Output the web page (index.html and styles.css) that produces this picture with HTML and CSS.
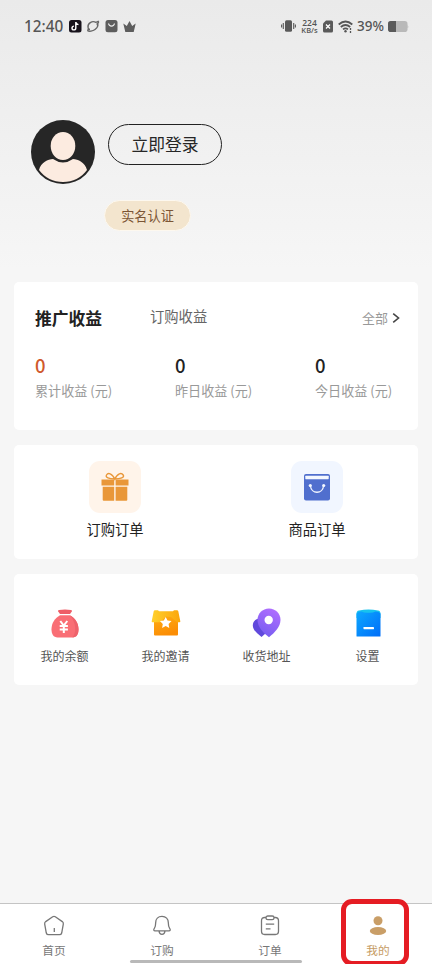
FILE: index.html
```html
<!DOCTYPE html>
<html lang="zh-CN">
<head>
<meta charset="utf-8">
<meta name="viewport" content="width=device-width, initial-scale=1">
<title>我的</title>
<link rel="stylesheet" href="styles.css">
</head>
<body>
<div class="app">
  <header class="status">
    <span class="clock">12:40</span>
    <svg width="68" height="14" viewBox="0 0 68 14">
      <rect x="0" y="1" width="12.500" height="12.500" rx="2.500" fill="#17121b"/>
      <path d="M6.800 3v6a1.900 1.900 0 1 1-1.900-1.900M6.800 3.200c.3 1.600 1.300 2.300 2.700 2.400" fill="none" stroke="#fff" stroke-width="1.400"/>
      <path d="M19 8.500C18.500 4 23 1.500 27 3.300l2.300-.9c.8.800-.4 2-1.800 3M19.500 9l-.7 2.700c1 1 5 .5 7.200-1.200 2.300-1.700 3.200-3.500 2.800-5.500M19 8.500c.3 1.500 1 2 2 2" fill="none" stroke="#666" stroke-width="1.400"/>
      <rect x="36.500" y="1" width="12" height="12.300" rx="2.500" fill="#5d5d5d"/>
      <path d="M39.500 4.500c.6 3.500 5.400 3.500 6 0" fill="none" stroke="#eee" stroke-width="1.200"/>
      <path d="M54.300 4.500l3.500 2.600L60.500 2l2.700 5.100 3.500-2.600-2 8.500h-8.400z" fill="#5d5d5d"/>
    </svg>
    <div class="status-right">
      <svg width="15" height="14" viewBox="0 0 15 14"><rect x="4" y="1.200" width="7" height="11.600" rx="1.500" fill="#5a5a5a"/><path d="M2.300 4v6M.6 5.500v3M12.700 4v6M14.400 5.500v3" stroke="#5a5a5a" stroke-width="1.100"/></svg>
      <span class="rate"><b>224</b><b class="unit">KB/s</b></span>
      <svg class="sim" width="10" height="13" viewBox="0 0 10 13"><path d="M3 .5h5.500q1.500 0 1.500 1.500v9q0 1.500-1.500 1.500h-7Q0 12.500 0 11V3.500z" fill="#5a5a5a"/><path d="M3 4.500l4 4M7 4.500l-4 4" stroke="#fff" stroke-width="1.300"/></svg>
      <svg class="wifi" width="15" height="13" viewBox="0 0 15 13"><g fill="none" stroke="#555" stroke-width="1.700"><path d="M.7 4.500q6.800-6 13.600 0M2.800 7q4.700-4 9.400 0M5 9.300q2.500-2 5 0"/></g><circle cx="7.500" cy="11.300" r="1.200" fill="#555"/><path d="M12.500 8v5" stroke="#555" stroke-width="1.300" stroke-dasharray="2 1"/></svg>
      <span class="percent">39%</span>
      <svg class="battery" width="21" height="11" viewBox="0 0 21 11"><rect width="19.500" height="11" rx="2.800" fill="#b9b9b9"/><path d="M8 0H2.800Q0 0 0 2.800v5.400Q0 11 2.800 11H8z" fill="#5a5a5a"/><path d="M19.500 3.500q1.500 2 0 4z" fill="#b9b9b9"/></svg>
    </div>
  </header>

  <section class="profile">
    <svg class="avatar" width="64" height="64" viewBox="0 0 64 64">
      <circle cx="32" cy="32" r="32" fill="#262626"/>
      <path d="M8 50C10 42 17 39.500 22 39q10 7 20 0c5 .5 12 3 14 11C50 58 42 62 32 62S14 58 8 50z" fill="#fcebe0"/>
      <ellipse cx="32" cy="26" rx="12.300" ry="14" fill="#fcebe0"/>
    </svg>
    <div class="profile-actions">
      <button class="login">立即登录</button>
      <span class="verify">实名认证</span>
    </div>
  </section>

  <main>
    <section class="card income">
      <div class="tabs">
        <h2>推广收益</h2>
        <span class="tab">订购收益</span>
        <span class="all">全部</span>
        <svg class="chevron" width="8" height="10" viewBox="0 0 8 10"><path d="M1.200 .7l5.300 4.300-5.300 4.300" fill="none" stroke="#444" stroke-width="1.600"/></svg>
      </div>
      <div class="stats">
        <div><b class="hot">0</b><span>累计收益 (元)</span></div>
        <div><b>0</b><span>昨日收益 (元)</span></div>
        <div><b>0</b><span>今日收益 (元)</span></div>
      </div>
    </section>

    <section class="card orders">
      <div class="order">
        <span class="tile warm"><svg width="28" height="30" viewBox="0 0 28 30" fill="#e99739">
          <path d="M.5 7.500h12.700v6H.5zM14.600 7.500h12.900v6H14.600zM1.700 14.800h11.500v14H2.700q-1 0-1-1zM14.600 14.800h11.700v13q0 1-1 1H14.600z"/>
          <path d="M13.800 7C8 7 4 5.500 5.500 3S11 1 13.800 7C16.600 1 20.500.5 22.200 3s-2.600 4-8.400 4z" fill="none" stroke="#e99739" stroke-width="1.400"/>
        </svg></span>
        <span>订购订单</span>
      </div>
      <div class="order">
        <span class="tile cool"><svg width="26" height="27" viewBox="0 0 26 27"><rect width="26" height="26.500" rx="2" fill="#506fce"/><rect x="1.300" y="1.700" width="23.400" height="3.500" rx=".6" fill="#f3f7ff"/><path d="M6.300 11.500c1 9 12.400 9 13.400 0" fill="none" stroke="#f3f7ff" stroke-width="1.300"/><circle cx="6.300" cy="11.500" r="1.600" fill="#f3f7ff"/><circle cx="19.700" cy="11.500" r="1.600" fill="#f3f7ff"/></svg></span>
        <span>商品订单</span>
      </div>
    </section>

    <section class="card tools">
      <div class="tool">
        <svg width="30" height="30" viewBox="0 0 30 30">
          <path d="M9 2q6-1 12 0 1.500.3.800 1.500L20 6H10L8.200 3.500Q7.500 2.300 9 2z" fill="#ee5e67"/>
          <path d="M10 7.300h10c5 3 8.500 7.500 8.500 14 0 5-2 8.200-6 8.200h-15c-4 0-6-3.200-6-8.200C1.500 14.800 5 10.300 10 7.300z" fill="#f96e75"/>
          <path d="M20 7.300c5 3 8.500 7.500 8.500 14 0 5-2 8.200-6 8.200 4-5 4-14-2.500-22.200z" fill="#ee626b"/>
          <path d="M10.300 13l3.400 4.500L17.300 13M9.700 18h8.200M9.700 21.500h8.200M13.800 17.500v7.500" fill="none" stroke="#fff" stroke-width="2"/>
        </svg>
        <span>我的余额</span>
      </div>
      <div class="tool">
        <svg width="30" height="30" viewBox="0 0 30 30">
          <defs><linearGradient id="box" x1="0" x2=".4" y2="1"><stop stop-color="#ffae13"/><stop offset="1" stop-color="#fb8d05"/></linearGradient><linearGradient id="lid"><stop stop-color="#ffd02c"/><stop offset="1" stop-color="#fba50b"/></linearGradient></defs>
          <path d="M3 8h24v18.500q0 1-1 1H4q-1 0-1-1z" fill="url(#box)"/>
          <path d="M4 2.300h3l1 1h14l1-1h3q1 0 1.300 1l2 10q.2 1-.8 1H26L20 9l-5-.5L9 14.300H1.500q-1 0-.8-1l2-10q.3-1 1.300-1z" fill="url(#lid)"/>
          <path d="M14.700 9l1.800 3.600 4 .5-2.900 2.800.7 4-3.600-1.900-3.600 1.900.7-4-2.900-2.800 4-.5z" fill="#fff"/>
        </svg>
        <span>我的邀请</span>
      </div>
      <div class="tool">
        <svg width="30" height="30" viewBox="0 0 30 30">
          <defs><linearGradient id="pin" x1=".7" x2=".3" y2="1"><stop stop-color="#b06eff"/><stop offset="1" stop-color="#755cf0"/></linearGradient></defs>
          <path d="M10 10C4 10 .8 13 .8 17.500c0 5 5.200 8.500 8.700 11.500L14 25z" fill="#6049dc"/>
          <path d="M17 .5c6.500 0 11.500 5 11.500 11.300 0 7-5.500 12.500-11.500 17.500C10.500 24.300 5.500 18.800 5.500 11.800 5.500 5.500 10.500.5 17 .5z" fill="url(#pin)"/>
          <circle cx="16.700" cy="12" r="4.200" fill="#fff"/>
        </svg>
        <span>收货地址</span>
      </div>
      <div class="tool">
        <svg width="30" height="30" viewBox="0 0 30 30">
          <defs><linearGradient id="drawer" x1="0" x2="1" y2="1"><stop stop-color="#0da8ff"/><stop offset="1" stop-color="#006df8"/></linearGradient></defs>
          <path d="M3.500 6Q3.500 3 6 2.600 15.500.5 25 2.600q2.500.4 2.500 3.400v4h-24z" fill="#17c3ee"/>
          <path d="M3.500 5.500Q5.500 3.300 8.500 3.500q3 1.500 7 1.200 4 .3 7-1.200 3-.2 5 2v22.500q0 .5-.5.500H4q-.5 0-.5-.5z" fill="url(#drawer)"/>
          <rect x="10.500" y="19" width="10.500" height="2.200" rx=".4" fill="#fff"/>
        </svg>
        <span>设置</span>
      </div>
    </section>
  </main>

  <nav class="nav">
    <a class="nav-item">
      <svg viewBox="0 0 22 22"><path d="M9.700 1.800q1.300-.9 2.600 0l7 4.800q1.300 1 1 2.500L18.700 18q-.5 1.700-2.200 1.700h-11q-1.700 0-2.200-1.700L1.700 9.100q-.3-1.500 1-2.500zM11.300 13v4"/></svg>
      <span>首页</span>
    </a>
    <a class="nav-item">
      <svg viewBox="0 0 22 22"><path d="M11 1.300C7 1.300 4.700 4 4.700 7.500c0 4-.6 4.500-1.600 6.300-.7 1.300-.3 2 .9 2h14c1.200 0 1.600-.7.900-2-1-1.800-1.600-2.300-1.600-6.300C17.300 4 15 1.300 11 1.300zM8 16c.5 4.400 5.500 4.400 6 0"/></svg>
      <span>订购</span>
    </a>
    <a class="nav-item">
      <svg viewBox="0 0 22 22"><path d="M7 2.500H5.700Q2.500 2.500 2.500 5.700v10.600q0 3.200 3.200 3.200h10.600q3.200 0 3.200-3.200V5.700q0-3.200-3.200-3.200H15M6.800 9.200h8.400M6.800 13.800h4.700"/><rect x="7" y="1" width="8" height="3.700" rx="1.800"/></svg>
      <span>订单</span>
    </a>
    <a class="nav-item active">
      <svg viewBox="0 0 22 22"><circle cx="11" cy="5.700" r="4.500"/><ellipse cx="11" cy="16" rx="8.200" ry="4"/></svg>
      <span>我的</span>
    </a>
    <i class="home-bar"></i>
    <i class="highlight"></i>
  </nav>
</div>
</body>
</html>
```
FILE: styles.css
```css
* { box-sizing: border-box; }

body {
  margin: 0;
  font-family: "Noto Sans CJK SC", sans-serif;
  color: #222;
  background: #f6f6f6;
}

.app {
  display: flex;
  flex-direction: column;
  height: 964px;
  overflow: hidden;
  background: linear-gradient(#eaeaea 0, #f6f6f6 270px);
}

svg { display: block; flex: none; }

.status {
  display: flex;
  align-items: center;
  height: 52px;
  padding: 0 23px 0 24px;
  font-family: "Noto Sans", sans-serif;
  color: #555;
}

.clock {
  width: 45px;
  font-size: 15.300px;
  font-weight: 500;
}

.status-right {
  display: flex;
  align-items: center;
  margin-left: auto;
}

.rate {
  display: flex;
  flex-direction: column;
  align-items: center;
  gap: 1px;
  width: 19px;
  margin: 0 4px 0 4px;
  font-family: "Open Sans", sans-serif;
  font-size: 8.500px;
  line-height: 7px;
}

.rate b { font-weight: 600; }
.rate .unit { font-size: 7.500px; }
.wifi { margin: 0 4px 0 5px; }
.percent { width: 28px; font-size: 13.500px; font-weight: 500; }
.battery { margin: 0 0 0 3px; }

.profile {
  display: flex;
  gap: 9px;
  height: 230px;
  padding: 68px 31px 0;
}

.profile-actions {
  display: flex;
  flex-direction: column;
  align-items: flex-start;
  padding: 4px 0 0 4px;
}

.login {
  width: 114px;
  height: 41px;
  padding: 0;
  border: 1.500px solid #222;
  border-radius: 21px;
  background: transparent;
  font: 16.800px/37px "Noto Sans CJK SC", sans-serif;
  color: #262626;
}

.verify {
  width: 87px;
  height: 31px;
  margin: 35px 0 0 -4px;
  border: 1.500px solid #fdf8ef;
  border-radius: 16px;
  background: #f3e5ce;
  font-size: 13.200px;
  line-height: 29px;
  text-align: center;
  color: #7b5535;
}

main {
  display: flex;
  flex-direction: column;
  gap: 15px;
  padding: 0 14px;
}

.card {
  border-radius: 5px;
  background: #fff;
}

.income { height: 148px; padding: 24px 18px 0 21px; }

.tabs { display: flex; align-items: center; height: 24px; }
.tabs h2 { width: 115px; margin: 0; font-size: 16.800px; line-height: 24px; }
.tab { font-size: 14.300px; line-height: 20px; margin-top: -4px; color: #666; }
.all { margin-left: auto; font-size: 13px; line-height: 20px; color: #999; }
.chevron { margin-left: 4px; }

.stats { display: grid; grid-template-columns: repeat(3, 140px); margin-top: 23px; }
.stats div { display: flex; flex-direction: column; white-space: nowrap; }
.stats b { font-size: 18.500px; line-height: 25px; font-weight: 500; }
.stats .hot { color: #d0592b; }
.stats span { margin-top: 1px; font-size: 13.100px; line-height: 24px; color: #999; }

.orders { display: flex; height: 114px; padding-top: 16px; }
.order {
  display: flex;
  flex: 1;
  flex-direction: column;
  align-items: center;
  gap: 6px;
  font-size: 14.300px;
  line-height: 20px;
}
.tile {
  display: flex;
  align-items: center;
  justify-content: center;
  width: 52px;
  height: 52px;
  border-radius: 11px;
}
.warm { background: #fff4ea; }
.cool { background: #f1f6ff; }

.tools { display: flex; height: 111px; padding-top: 34px; }
.tool {
  display: flex;
  flex: 1;
  flex-direction: column;
  align-items: center;
  gap: 9px;
  font-size: 12px;
  line-height: 18px;
  color: #555;
}

.nav {
  position: relative;
  display: flex;
  height: 61px;
  margin-top: auto;
  padding-top: 11px;
  border-top: 1px solid #c4c4c4;
  background: #fff;
}
.nav-item {
  display: flex;
  flex: 1;
  flex-direction: column;
  align-items: center;
  gap: 4px;
  font-size: 11.700px;
  line-height: 18px;
  color: #777;
}
.nav-item svg {
  width: 22px;
  height: 22px;
  fill: none;
  stroke: #777;
  stroke-width: 1.300;
}
.nav-item.active { color: #c69c64; }
.nav-item.active svg { fill: #c99e67; stroke: none; }

.home-bar {
  position: absolute;
  left: 130px;
  bottom: 1px;
  width: 172px;
  height: 3px;
  border-radius: 2px;
  background: #b9b9b9;
}
.highlight {
  position: absolute;
  left: 341px;
  top: -5px;
  width: 68px;
  height: 67px;
  border: 5px solid #e51c23;
  border-radius: 11px;
}
```
